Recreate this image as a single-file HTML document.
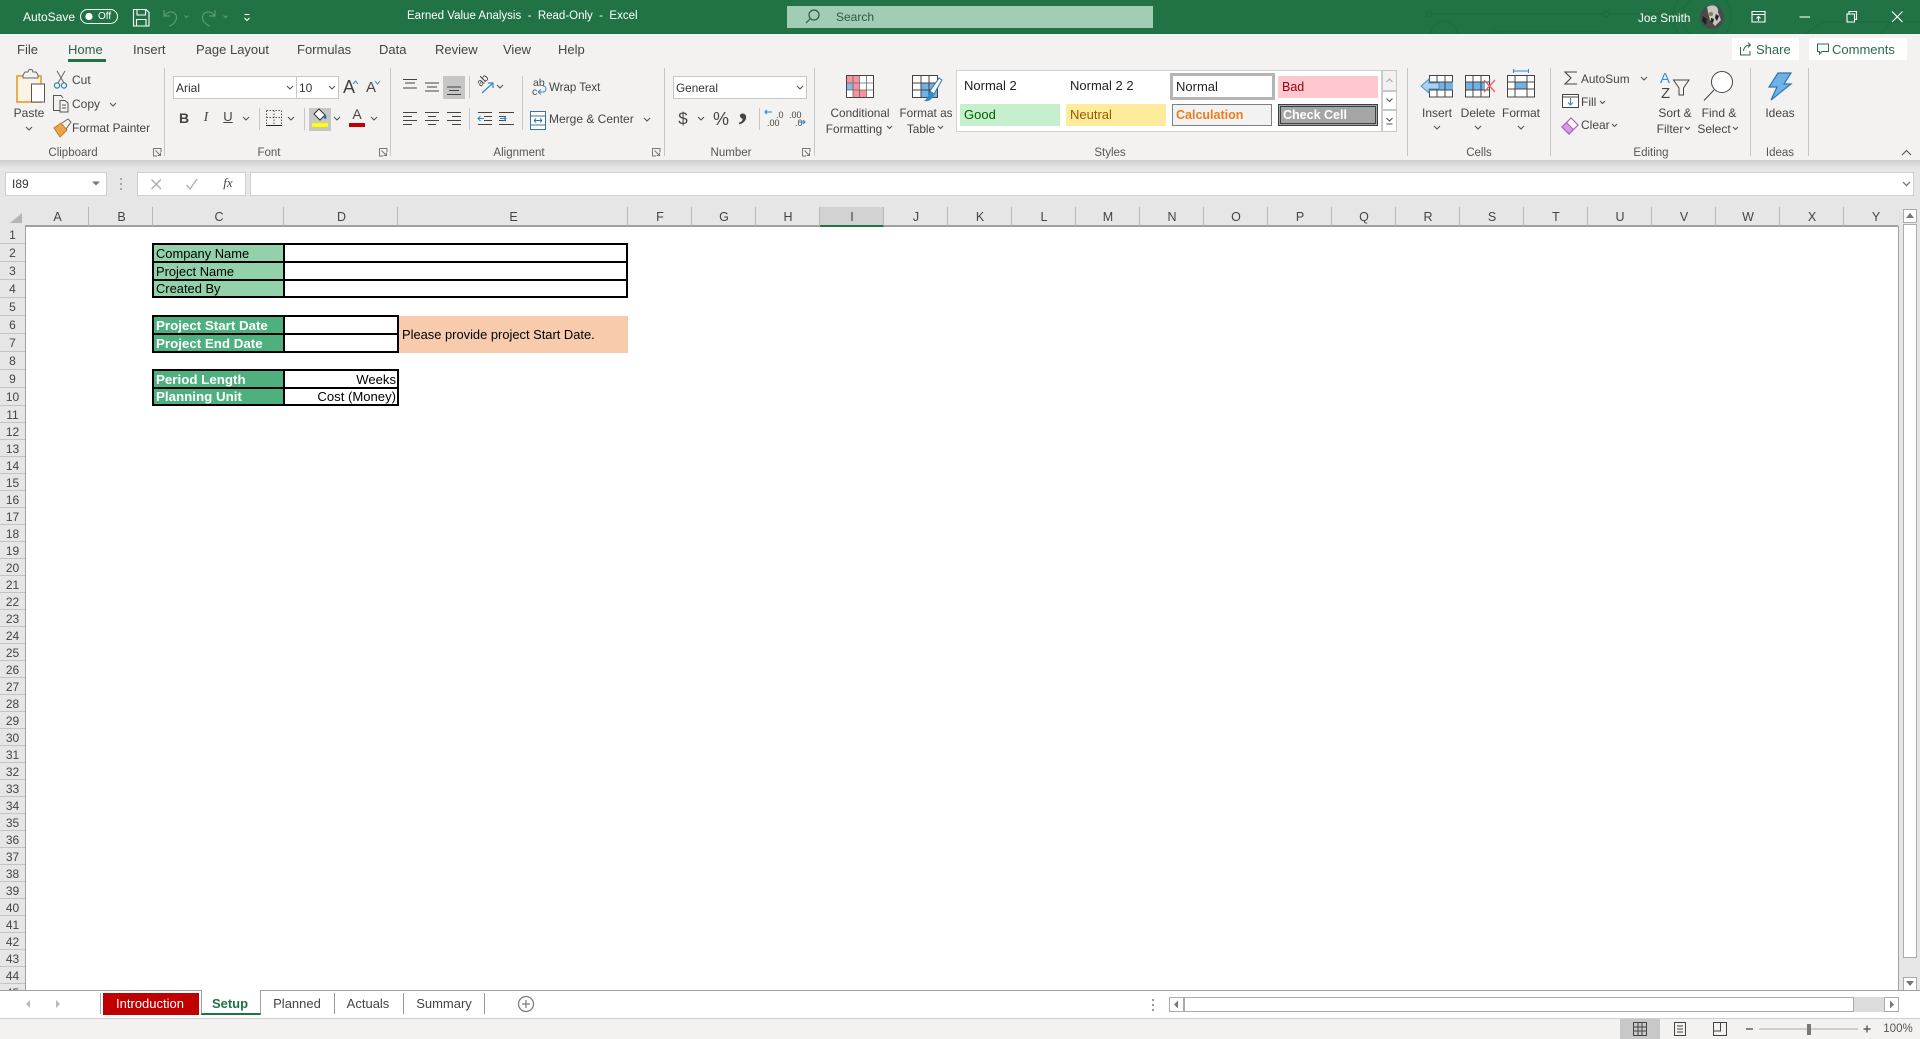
<!DOCTYPE html>
<html lang="en"><head><meta charset="utf-8"><title>Earned Value Analysis - Read-Only - Excel</title>
<style>
*{box-sizing:border-box;margin:0;padding:0}
html,body{width:1920px;height:1039px;overflow:hidden;background:#fff;font-family:"Liberation Sans",sans-serif}
.a{position:absolute}
.t{position:absolute;white-space:pre;line-height:16px;height:16px;font-size:12px;color:#444}
.c{transform:translateX(-50%)}
.w{color:#fff}
.tab{font-size:13px;color:#444}
.lb{font-size:11.5px;color:#555}
.cols{position:absolute;left:25px;top:207px;width:1873px;height:20px;display:flex;overflow:hidden}
.cols div{flex:none;width:64px;height:20px;text-align:center;font-size:12.5px;line-height:20px;color:#444;padding-left:1px;border-right:1px solid #b8b8b8;border-bottom:2px solid #a0a0a0}
.cols .p{padding-left:2px}
.rows{position:absolute;left:0;top:226px;width:26px;height:764px;overflow:hidden;background:#e6e6e6;border-right:1px solid #a0a0a0}
.rows div{height:17px;text-align:center;font-size:12px;line-height:18px;color:#444;border-bottom:1px solid #c4c4c4}
.rows .b{height:18px;line-height:19px}
.k{position:absolute;background:#000}
.f{position:absolute;font-size:12.9px;line-height:17px;color:#000;white-space:pre;padding-left:2px;background:#fff;overflow:hidden}
.s{line-height:15.5px}
.l{background:#92d1aa}
.d{background:#4eb07e;color:#fff;font-weight:bold;font-size:13.33px}
.r{text-align:right;padding:0 1px 0 0;font-size:13.1px}
.sty{position:absolute;font-size:13px;line-height:22px;white-space:pre;padding-left:4px}
</style></head><body>

<!-- title bar -->
<div class="a" style="left:0;top:0;width:1920px;height:34px;background:#217346"></div>
<div class="a" style="left:0;top:34px;width:1920px;height:126px;background:#f3f2f1"></div>
<div class="a" style="left:0;top:160px;width:1920px;height:830px;background:#e6e6e6"></div>
<div class="a" style="left:0;top:160px;width:1920px;height:8px;background:linear-gradient(#cfcfcf,#e6e6e6)"></div>

<svg class="a" style="left:0;top:0" width="1920" height="34" viewBox="0 0 1920 34" fill="none">
<g stroke="#1e6c41" stroke-width="1.3">
<path d="M1432 14H1603M1609 14H1674"/><circle cx="1429" cy="14" r="3"/><circle cx="1606" cy="14" r="3"/>
<circle cx="1702" cy="17" r="29"/><circle cx="1702" cy="17" r="20"/>
<path d="M1431 34a13 13 0 0 1 26 0M1490 34a4 4 0 0 1 8 0M1498 31H1600M1806 34L1822 22H1920M1880 34L1905 8"/>
</g>
</svg>

<div class="a" style="left:787px;top:6px;width:366px;height:22px;background:#a0cdb3"></div>

<span class="t w" style="left:23px;top:9px">AutoSave</span>
<div class="a" style="left:80px;top:9px;width:38px;height:15px;border:1.3px solid #fff;border-radius:8px"></div>
<span class="t w" style="left:98px;top:9px;font-size:10px">Off</span>
<span class="t w" style="left:407px;top:8px;font-size:11.5px">Earned Value Analysis  -  Read-Only  -  Excel</span>
<span class="t" style="left:836px;top:9px;color:#2c5a43">Search</span>
<span class="t w" style="left:1638px;top:10px;font-size:11.8px">Joe Smith</span>

<!-- tabs -->
<span class="t tab" style="left:17px;top:42px">File</span>
<span class="t tab" style="left:68px;top:42px;color:#2f5f48">Home</span>
<div class="a" style="left:68px;top:59px;width:38px;height:3px;background:#217346"></div>
<span class="t tab" style="left:133px;top:42px">Insert</span>
<span class="t tab" style="left:196px;top:42px">Page Layout</span>
<span class="t tab" style="left:297px;top:42px">Formulas</span>
<span class="t tab" style="left:379px;top:42px">Data</span>
<span class="t tab" style="left:435px;top:42px">Review</span>
<span class="t tab" style="left:503px;top:42px">View</span>
<span class="t tab" style="left:558px;top:42px">Help</span>

<div class="a" style="left:1732px;top:38px;width:67px;height:22px;background:#fff"></div>
<div class="a" style="left:1809px;top:38px;width:98px;height:22px;background:#fff"></div>
<span class="t tab" style="left:1756px;top:42px;color:#2a6a4a">Share</span>
<span class="t tab" style="left:1832px;top:42px;color:#2a6a4a">Comments</span>

<!-- ribbon field boxes and highlights -->
<div class="a" style="left:173px;top:76px;width:124px;height:23px;background:#fff;border:1px solid #c6c6c6"></div>
<div class="a" style="left:296px;top:76px;width:43px;height:23px;background:#fff;border:1px solid #c6c6c6"></div>
<div class="a" style="left:309px;top:108px;width:22px;height:23px;background:#c6c6c6"></div>
<div class="a" style="left:443px;top:76px;width:22px;height:23px;background:#c6c6c6"></div>
<div class="a" style="left:673px;top:76px;width:134px;height:23px;background:#fff;border:1px solid #c6c6c6"></div>

<!-- styles gallery -->
<div class="a" style="left:956px;top:70px;width:426px;height:62px;background:#fff;border:1px solid #d0d0d0"></div>
<div class="a" style="left:1382px;top:70px;width:15px;height:21px;background:#f3f2f1;border:1px solid #c6c6c6"></div>
<div class="a" style="left:1382px;top:91px;width:15px;height:19px;background:#fff;border:1px solid #c6c6c6"></div>
<div class="a" style="left:1382px;top:110px;width:15px;height:22px;background:#fff;border:1px solid #c6c6c6"></div>
<div class="sty" style="left:960px;top:75px;width:100px;height:22px;color:#222">Normal 2</div>
<div class="sty" style="left:1066px;top:75px;width:100px;height:22px;color:#222">Normal 2 2</div>
<div class="sty" style="left:1170px;top:73px;width:105px;height:27px;color:#222;border:3px solid #b4b4b4;background:#fff;padding-left:3px">Normal</div>
<div class="sty" style="left:1278px;top:76px;width:100px;height:22px;color:#9c0006;background:#ffc7ce;font-size:12.5px">Bad</div>
<div class="sty" style="left:960px;top:104px;width:100px;height:22px;color:#006100;background:#c6efce">Good</div>
<div class="sty" style="left:1066px;top:104px;width:100px;height:22px;color:#9c5700;background:#ffeb9c">Neutral</div>
<div class="sty" style="left:1172px;top:104px;width:100px;height:22px;color:#ee7d1b;background:#f2f2f2;border:1px solid #7f7f7f;font-weight:bold;line-height:20px;padding-left:3px;font-size:12.5px">Calculation</div>
<div class="sty" style="left:1278px;top:104px;width:100px;height:22px;color:#fff;background:#a5a5a5;border:3px double #3f3f3f;font-weight:bold;line-height:16px;padding-left:2px;font-size:12.5px">Check Cell</div>

<!-- ribbon text -->
<span class="t c" style="left:29px;top:105px">Paste</span>
<span class="t" style="left:72px;top:72px">Cut</span>
<span class="t" style="left:72px;top:96px">Copy</span>
<span class="t" style="left:72px;top:120px;font-size:11.8px">Format Painter</span>
<span class="t c lb" style="left:73px;top:145px">Clipboard</span>
<span class="t" style="left:176px;top:80px;color:#333">Arial</span>
<span class="t" style="left:299px;top:80px;color:#333">10</span>
<span class="t" style="left:343px;top:78px;font-size:18px;line-height:18px">A</span>
<span class="t" style="left:366px;top:80px;font-size:15px">A</span>
<span class="t c" style="left:184px;top:110px;font-weight:bold;font-size:14px">B</span>
<span class="t c" style="left:206px;top:110px;font-style:italic;font-size:14px;font-family:'Liberation Serif',serif">I</span>
<span class="t c" style="left:228px;top:109px;font-size:13px;text-decoration:underline">U</span>
<span class="t c" style="left:357px;top:106px;font-size:14px">A</span>
<span class="t c lb" style="left:269px;top:145px">Font</span>
<span class="t" style="left:549px;top:80px;font-size:11.5px">Wrap Text</span>
<span class="t" style="left:549px;top:111px">Merge &amp; Center</span>
<span class="t c lb" style="left:519px;top:145px">Alignment</span>
<span class="t" style="left:676px;top:80px;color:#333;font-size:11.8px">General</span>
<span class="t c" style="left:683px;top:111px;font-size:17px">$</span>
<span class="t c" style="left:721px;top:111px;font-size:18px">%</span>
<span class="t" style="left:776px;top:107px;font-size:9px">.0</span>
<span class="t" style="left:767px;top:115px;font-size:9px">.00</span>
<span class="t" style="left:789px;top:107px;font-size:9px">.00</span>
<span class="t" style="left:795px;top:115px;font-size:9px">.0</span>
<span class="t c lb" style="left:731px;top:145px">Number</span>
<span class="t c" style="left:860px;top:105px;font-size:11.8px">Conditional</span>
<span class="t c" style="left:854px;top:121px;font-size:11.8px">Formatting</span>
<span class="t c" style="left:926px;top:105px;font-size:11.8px">Format as</span>
<span class="t c" style="left:921px;top:121px;font-size:11.8px">Table</span>
<span class="t c lb" style="left:1110px;top:145px">Styles</span>
<span class="t c" style="left:1437px;top:105px">Insert</span>
<span class="t c" style="left:1478px;top:105px">Delete</span>
<span class="t c" style="left:1521px;top:105px">Format</span>
<span class="t c lb" style="left:1479px;top:145px">Cells</span>
<span class="t" style="left:1581px;top:71px;font-size:11.8px">AutoSum</span>
<span class="t" style="left:1581px;top:94px">Fill</span>
<span class="t" style="left:1581px;top:117px">Clear</span>
<span class="t" style="left:1660px;top:71px;font-size:15px;color:#3d8fcb">A</span>
<span class="t" style="left:1661px;top:86px;font-size:15px;color:#444">Z</span>
<span class="t c" style="left:1675px;top:105px">Sort &amp;</span>
<span class="t c" style="left:1670px;top:121px">Filter</span>
<span class="t c" style="left:1719px;top:105px">Find &amp;</span>
<span class="t c" style="left:1714px;top:121px">Select</span>
<span class="t c lb" style="left:1651px;top:145px">Editing</span>
<span class="t c" style="left:1780px;top:105px">Ideas</span>
<span class="t c lb" style="left:1780px;top:145px">Ideas</span>

<!-- formula bar -->
<div class="a" style="left:5px;top:172px;width:102px;height:24px;background:#fff;border:1px solid #cfcfcf"></div>
<div class="a" style="left:137px;top:172px;width:109px;height:24px;background:#fff;border:1px solid #cfcfcf"></div>
<div class="a" style="left:250px;top:172px;width:1664px;height:24px;background:#fff;border:1px solid #cfcfcf"></div>
<span class="t" style="left:12px;top:176px;font-size:12px;color:#333">I89</span>
<span class="t c" style="left:228px;top:175px;font-size:13px;font-style:italic;font-family:'Liberation Serif',serif;color:#444">fx</span>

<!-- sheet -->
<div class="a" style="left:25px;top:226px;width:1873px;height:764px;background:#fff"></div>
<div class="cols">
<div class="p">A</div><div class="p">B</div><div class="p" style="width:131px">C</div><div class="p" style="width:114px">D</div><div class="p" style="width:230px">E</div><div>F</div><div>G</div><div>H</div><div style="background:#d2d2d2;border-bottom:2px solid #217346">I</div><div>J</div><div>K</div><div>L</div><div>M</div><div>N</div><div>O</div><div>P</div><div>Q</div><div>R</div><div>S</div><div>T</div><div>U</div><div>V</div><div>W</div><div>X</div><div>Y</div>
</div>
<div class="rows">
<div class="b">1</div><div class="b">2</div><div class="b">3</div><div class="b">4</div><div class="b">5</div><div class="b">6</div><div class="b">7</div><div class="b">8</div><div class="b">9</div><div class="b">10</div><div>11</div><div>12</div><div>13</div><div>14</div><div>15</div><div>16</div><div>17</div><div>18</div><div>19</div><div>20</div><div>21</div><div>22</div><div>23</div><div>24</div><div>25</div><div>26</div><div>27</div><div>28</div><div>29</div><div>30</div><div>31</div><div>32</div><div>33</div><div>34</div><div>35</div><div>36</div><div>37</div><div>38</div><div>39</div><div>40</div><div>41</div><div>42</div><div>43</div><div>44</div><div>45</div>
</div>
<div class="a" style="left:1898px;top:226px;width:1px;height:764px;background:#a0a0a0"></div>

<!-- tables -->
<div class="k" style="left:152px;top:243px;width:476px;height:55px"></div>
<div class="f l" style="left:154px;top:245px;width:129px;height:16px">Company Name</div>
<div class="f l" style="left:154px;top:263px;width:129px;height:16px">Project Name</div>
<div class="f l s" style="left:154px;top:281px;width:129px;height:15px">Created By</div>
<div class="f" style="left:285px;top:245px;width:341px;height:16px"></div>
<div class="f" style="left:285px;top:263px;width:341px;height:16px"></div>
<div class="f" style="left:285px;top:281px;width:341px;height:15px"></div>

<div class="k" style="left:152px;top:315px;width:247px;height:38px"></div>
<div class="f d" style="left:154px;top:317px;width:129px;height:16px">Project Start Date</div>
<div class="f d" style="left:154px;top:335px;width:129px;height:16px">Project End Date</div>
<div class="f" style="left:285px;top:317px;width:112px;height:16px"></div>
<div class="f" style="left:285px;top:335px;width:112px;height:16px"></div>
<div class="f" style="left:399px;top:316px;width:229px;height:37px;background:#f8cbad;line-height:37px;padding-left:3px">Please provide project Start Date.</div>

<div class="k" style="left:152px;top:369px;width:247px;height:37px"></div>
<div class="f d" style="left:154px;top:371px;width:129px;height:16px">Period Length</div>
<div class="f d s" style="left:154px;top:389px;width:129px;height:15px">Planning Unit</div>
<div class="f r" style="left:285px;top:371px;width:112px;height:16px">Weeks</div>
<div class="f r s" style="left:285px;top:389px;width:112px;height:15px">Cost (Money)</div>

<!-- vertical scrollbar -->
<div class="a" style="left:1903px;top:209px;width:14px;height:14px;background:#fff;border:1px solid #ababab"></div>
<div class="a" style="left:1903px;top:224px;width:14px;height:734px;background:#fff;border:1px solid #ababab"></div>
<div class="a" style="left:1903px;top:977px;width:14px;height:14px;background:#fff;border:1px solid #ababab"></div>

<!-- sheet tab bar -->
<div class="a" style="left:0;top:990px;width:1920px;height:1px;background:#a0a0a0"></div>
<div class="a" style="left:0;top:1018px;width:1920px;height:21px;background:#f3f2f1;border-top:1px solid #cfcfcf"></div>
<div class="a" style="left:103px;top:993px;width:96px;height:22px;background:#c00000"></div>
<div class="a" style="left:201px;top:990px;width:60px;height:25px;background:#fff;border-left:1px solid #a0a0a0;border-right:1px solid #a0a0a0;border-bottom:2px solid #217346"></div>
<span class="t tab c" style="left:150px;top:996px;color:#fff">Introduction</span>
<span class="t tab c" style="left:230px;top:996px;color:#217346;font-weight:bold">Setup</span>
<span class="t tab c" style="left:297px;top:996px">Planned</span>
<span class="t tab c" style="left:368px;top:996px">Actuals</span>
<span class="t tab c" style="left:444px;top:996px">Summary</span>
<div class="a" style="left:100px;top:993px;width:1px;height:21px;background:#aaa"></div>
<div class="a" style="left:334px;top:993px;width:1px;height:21px;background:#999"></div>
<div class="a" style="left:403px;top:993px;width:1px;height:21px;background:#999"></div>
<div class="a" style="left:484px;top:993px;width:1px;height:21px;background:#999"></div>

<!-- horizontal scrollbar -->
<div class="a" style="left:1169px;top:997px;width:729px;height:15px;background:#dcdcdc"></div>
<div class="a" style="left:1169px;top:997px;width:15px;height:15px;background:#fff;border:1px solid #ababab"></div>
<div class="a" style="left:1184px;top:997px;width:670px;height:15px;background:#fff;border:1px solid #ababab"></div>
<div class="a" style="left:1884px;top:997px;width:15px;height:15px;background:#fff;border:1px solid #ababab"></div>

<!-- status bar -->
<div class="a" style="left:1620px;top:1019px;width:40px;height:20px;background:#c8c8c8"></div>
<span class="t c" style="left:1898px;top:1021px;font-size:11.5px;color:#555">100%</span>

<!-- icons -->
<svg class="a" style="left:0;top:0" width="1920" height="1039" viewBox="0 0 1920 1039" fill="none">
<!-- toggle dot + QAT -->
<circle cx="89" cy="16.5" r="3.6" fill="#fff"/>
<g stroke="#fff" stroke-width="1.1">
<path d="M133.5 9.5H146L149 12.5V26H133.5ZM137 9.5V15H145.5V9.5M136.5 26V19.5H146V26"/>
<path d="M244.5 14.5h5M244.5 18l2.5 2.500 2.500-2.500" />
</g>
<g stroke="#5a9a76" stroke-width="1.2">
<path d="M164 10V16H170M164.5 16C168 10 176 11 176.500 17C176.800 21 173 25 169 26"/>
<path d="M215 10V16H209M214.500 16C211 10 203 11 202.500 17C202.200 21 206 25 210 26"/>
<path d="M184.500 15.500l2 2 2-2M223.500 15.500l2 2 2-2"/>
</g>
<!-- search icon -->
<g stroke="#2c5a43" stroke-width="1.2"><circle cx="814" cy="15" r="5"/><path d="M810.500 18.500L806 23"/></g>
<!-- avatar -->
<circle cx="1712" cy="17" r="12" fill="#4a4a48"/>
<path d="M1707 7C1714 3 1719 7 1718 12L1721 20 1715 26 1710 20 1708 12Z" fill="#c9c6c0"/>
<path d="M1703 16l4 3-1 6-4-4ZM1716 14l3 2-2 5-2-3ZM1711 18l3 1-1 4-2-1Z" fill="#222"/>
<circle cx="1711" cy="14" r="2" fill="#8a7a70"/>
<!-- window controls -->
<g stroke="#fff" stroke-width="1.1">
<path d="M1752 11.500H1765V22H1752ZM1752 14.500H1765M1758.500 21V16.500M1756.500 18.500l2-2 2 2"/>
<path d="M1799.500 17H1810"/>
<path d="M1847 14H1854.500V22H1847ZM1849 14V11.500H1856.500V19.500H1854.500"/>
<path d="M1892 11.500L1902.500 22M1902.500 11.500L1892 22"/>
</g>
<g stroke="#2a6a4a" stroke-width="1"><path d="M1740.500 47V55H1750V51M1743.500 51C1744 47 1746.500 45 1750.500 45M1748 42.500l2.500 2.500-2.500 2.500"/><path d="M1817.500 44H1828.500V51.500H1822L1819.500 54V51.500H1817.500Z"/></g>

<!-- group separators -->
<g stroke="#c8c6c4" stroke-width="1">
<path d="M164.500 68V156M390.500 68V156M664.500 68V156M814.500 68V156M1407.500 68V156M1550.500 68V156M1750.500 68V156M1808.500 68V156"/>
<path d="M259.500 108V130M304.500 108V130M469.500 76V98M469.500 108V130M522.500 76V130M759.500 108V130"/>
</g>
<!-- launchers -->
<g stroke="#777" stroke-width="1">
<path d="M161 152V148.500H153.500V156H157M155.500 150.500L160.500 155.500M160.500 152.500V155.500H157.500"/>
<path d="M387 152V148.500H379.500V156H383M381.500 150.500L386.500 155.500M386.500 152.500V155.500H383.500"/>
<path d="M660 152V148.500H652.500V156H656M654.500 150.500L659.500 155.500M659.500 152.500V155.500H656.500"/>
<path d="M810 152V148.500H802.500V156H806M804.500 150.500L809.500 155.500M809.500 152.500V155.500H806.500"/>
</g>
<!-- chevrons -->
<path stroke="#555" stroke-width="1.1" d="M26 127l3 3 3-3M110 103l3 3 3-3M287 86l3 3 3-3M329 86l3 3 3-3M243 117l3 3 3-3M288 117l3 3 3-3M334 117l3 3 3-3M371 117l3 3 3-3M497 85l3 3 3-3M644 118l3 3 3-3M698 117l3 3 3-3M797 86l3 3 3-3M887 126l2.500 2.500 2.500-2.500M938 126l2.500 2.500 2.500-2.500M1434 126l3 3 3-3M1475 126l3 3 3-3M1518 126l3 3 3-3M1641 77l3 3 3-3M1600 101l2.500 2.500 2.500-2.500M1612 124l2.500 2.500 2.500-2.500M1685 127l2.500 2.500 2.500-2.500M1733 127l2.500 2.500 2.500-2.500M1386.500 98.500l3 3 3-3M1386.500 118l3 3 3-3M1386.500 124h6M1902 155l4.500-4.500 4.500 4.500"/>
<path stroke="#aaa" stroke-width="1.1" d="M1386.500 82l3-3 3 3"/>
<path stroke="#4b98cc" stroke-width="1.1" d="M353 84l2.500-3 2.500 3M375 81l2.500 3 2.500-3"/>

<!-- paste -->
<path d="M17 76H41V102H17Z" fill="#fdf3e3" stroke="#e6a23c" stroke-width="1.700"/>
<path d="M23 75L25 72H28L29 69.500H32L33 72H36L38 75V78H23Z" fill="#f3f2f1" stroke="#666"/>
<path d="M31.500 84H44.500V102H31.500Z" fill="#fff" stroke="#555"/>
<!-- cut -->
<g stroke="#666" stroke-width="1"><path d="M57 71L64 83M65 71L58 83"/></g>
<g stroke="#2e7eb5" stroke-width="1.200"><circle cx="57" cy="85.500" r="2.600"/><circle cx="64" cy="85.500" r="2.600"/></g>
<!-- copy -->
<path stroke="#555" d="M60 110.500H53.500V95.500H61L63 98M60 100.500H65L68 103V112H60ZM62 105H66M62 108H66"/>
<!-- painter -->
<path d="M54 128L61 123L67 130L60 137Z" fill="#eaa54a" stroke="#c77a24"/>
<path stroke="#666" d="M62 123L68 119L71 122L66 129"/>
<!-- borders -->
<path stroke="#555" stroke-dasharray="1.500 1.500" d="M266.500 110.500H281.500V125M266.500 110.500V125M274 110.500V125M266.500 117.500H281.500"/>
<path stroke="#222" d="M266 125.500H282"/>
<!-- fill colour -->
<path d="M314 114L319 109L325 115L320 120Z" fill="#fff" stroke="#333"/>
<path d="M325 114C327 116 327 119 325 119C324 119 323 117 325 114Z" fill="#2b6fa8"/>
<rect x="312" y="123" width="16" height="4" fill="#ffff00"/>
<rect x="349" y="123" width="16" height="4" fill="#c00000"/>
<!-- alignment -->
<path stroke="#444" d="M403 79.500H417M405 83H415M403 88H417M425 83H439M427 87H437M425 91H439M447 87H461M449 90.500H459M447 94.500H461M403 112.500H417M403 116.500H412M403 120.500H417M403 124.500H412M425 112.500H439M428 116.500H436M425 120.500H439M428 124.500H436M447 112.500H461M452 116.500H461M447 120.500H461M452 124.500H461M478 112.500H492M484 116.500H492M484 120.500H492M478 124.500H492M499 112.500H514M499 116.500H506M499 120.500H506M499 124.500H514"/>
<path stroke="#2e88c9" d="M484 118.500H478M480.500 116L478 118.500 480.500 121M500 118.500H506M503.500 116L506 118.500 503.500 121"/>
<!-- orientation -->
<text x="476" y="84" font-size="11" fill="#444" font-family="Liberation Sans" transform="rotate(-45 482 80)">ab</text>
<path stroke="#2e88c9" stroke-width="1.200" d="M482 93L493 83M488 83H493V88"/>
<!-- wrap -->
<path stroke="#2e88c9" d="M538 92H543C547 92 547 86 543 86M538 92l3-2.500M538 92l3 2.500"/>
<text x="533" y="86" font-size="10.500" fill="#444" font-family="Liberation Sans">ab</text>
<text x="532" y="95" font-size="10.500" fill="#444" font-family="Liberation Sans">c</text>
<rect x="530.500" y="111.500" width="15" height="18" fill="#fff" stroke="#33779f"/>
<path stroke="#33779f" d="M530.500 116H545.500M530.500 125H545.500M534 120.500H542M534 120.500l2-2M534 120.500l2 2M542 120.500l-2-2M542 120.500l-2 2"/>
<!-- number -->
<text x="743" y="119" font-size="36" font-weight="bold" fill="#444" text-anchor="middle" font-family="Liberation Serif">,</text>
<path stroke="#2e88c9" stroke-width="1.100" d="M765 112H772M767 110L765 112 767 114M799 122H805M803 120L805 122 803 124"/>
<!-- conditional formatting -->
<rect x="846.500" y="75.500" width="27" height="22" fill="#fff" stroke="#444"/>
<rect x="847" y="76" width="12" height="7" fill="#f8929c"/><rect x="853" y="83" width="6" height="7" fill="#f8929c"/><rect x="847" y="83" width="6" height="7" fill="#8fb6de"/><rect x="853" y="90" width="13" height="7" fill="#f8929c"/>
<path stroke="#666" stroke-width=".8" d="M846.500 83H873.500M846.500 90H873.500M853 75.500V97.500M859.500 75.500V97.500M866.500 75.500V97.500"/>
<!-- format as table -->
<rect x="912.500" y="75.500" width="25" height="22" fill="#fff" stroke="#444"/>
<rect x="921" y="83" width="16" height="14" fill="#6fb2e6"/>
<path stroke="#444" d="M912.500 83H937.500M912.500 90H937.500M921 75.500V97.500M929 75.500V97.500"/>
<path d="M942 80L934 94L930 91L939 78Z" fill="#fff" stroke="#2e75b5"/>
<path d="M930 92L934 95C932 100 928 102 924 101C927 99 928 96 930 92Z" fill="#2e88c9"/>
<!-- insert -->
<rect x="1429.500" y="75.500" width="23" height="21.500" fill="#fff" stroke="#444"/>
<rect x="1430" y="82" width="23" height="8" fill="#6fb2e6"/>
<path stroke="#444" d="M1429.500 82H1452.500M1429.500 90H1452.500M1437 75.500V97M1445 75.500V97"/>
<path d="M1421 86L1429 79V83H1439V89H1429V93Z" fill="#a9d2f0" stroke="#4a90c8"/>
<!-- delete -->
<rect x="1465.500" y="75.500" width="24" height="21.500" fill="#fff" stroke="#444"/>
<rect x="1466" y="82" width="19" height="8" fill="#6fb2e6"/>
<path stroke="#444" d="M1465.500 82H1489.500M1465.500 90H1489.500M1473 75.500V97M1481 75.500V97"/>
<path stroke="#e8635c" stroke-width="1.300" d="M1484 80L1495 92M1495 80L1484 92"/>
<!-- format -->
<rect x="1507.500" y="75.500" width="27" height="21.500" fill="#fff" stroke="#444"/>
<rect x="1515" y="82" width="12" height="7" fill="#6fb2e6"/>
<path stroke="#444" d="M1507.500 82H1534.500M1507.500 89H1534.500M1515 75.500V97M1527 75.500V97"/>
<path stroke="#2e88c9" d="M1513 71H1529M1513.500 69V73M1528.500 69V73"/>
<!-- editing -->
<path stroke="#444" stroke-width="1.100" d="M1577 72H1565L1571 78L1565 84H1577"/>
<rect x="1562.500" y="94.500" width="16" height="13" fill="#fff" stroke="#444"/>
<path stroke="#2e88c9" d="M1570.500 98V105M1568 102.500l2.500 2.500 2.500-2.500"/><path stroke="#444" d="M1562.500 97H1578.500"/>
<path d="M1562 127L1571 118L1578 125L1569 134Z" fill="#fff" stroke="#b05cc2" stroke-width="1.200"/>
<path d="M1562 127L1566.500 122.500L1573.500 129.500L1569 134Z" fill="#d49be0" stroke="#b05cc2"/>
<path stroke="#444" d="M1673.500 80H1689L1683.500 88V95L1679 95V88Z"/>
<g stroke="#444"><circle cx="1722" cy="82" r="10.500" fill="#fff"/><path d="M1714 90L1704 100.500"/></g>
<!-- ideas -->
<path d="M1778 73H1791L1784 84H1791L1771 100L1777 87H1769Z" fill="#6fb2e6" stroke="#2e75b5" stroke-width="1.200"/>
<!-- formula bar -->
<path fill="#777" d="M92 181.500H100L96 185.500Z"/>
<path fill="#aaa" d="M120 178h2v2h-2ZM120 183h2v2h-2ZM120 188h2v2h-2Z"/>
<path stroke="#aaa" stroke-width="1.300" d="M151.500 179.500L161 189M161 179.500L151.500 189M186.500 185L190 189L197 179"/>
<path stroke="#777" stroke-width="1.300" d="M1903 182l3.500 3.500 3.500-3.500"/>
<!-- corner triangle -->
<path fill="#b5b5b5" d="M22 213V223H10Z"/>
<!-- scroll arrows -->
<path fill="#777" d="M1910 213L1914 218H1906ZM1910 986L1906 981H1914ZM1174 1004.500L1178 1000.500V1008.500ZM1894 1004.500L1890 1000.500V1008.500Z"/>
<path fill="#b8b8b8" d="M26 1004L30 1000V1008ZM60 1004L56 1000V1008Z"/>
<!-- add sheet -->
<g stroke="#777" stroke-width="1.200"><circle cx="526" cy="1004" r="7.500"/><path d="M522 1004H530M526 1000V1008"/></g>
<path fill="#999" d="M1152 999h2v2h-2ZM1152 1004h2v2h-2ZM1152 1009h2v2h-2Z"/>
<!-- status bar icons -->
<path stroke="#444" d="M1633.500 1022.500H1646.500V1035.500H1633.500ZM1633.500 1027H1646.500M1633.500 1031H1646.500M1638 1022.500V1035.500M1642 1022.500V1035.500"/>
<path stroke="#444" d="M1674.500 1022.500H1685.500V1035.500H1674.500ZM1677 1026H1683M1677 1029H1683M1677 1032H1683"/>
<path stroke="#444" d="M1713.500 1022.500H1726.500V1035.500H1713.500ZM1713.500 1031H1720.500V1022.500"/>
<path stroke="#444" stroke-width="1.200" d="M1746 1029H1753M1863.500 1029H1870.500M1867 1025.500V1032.500"/>
<path stroke="#aaa" d="M1759 1029H1858"/>
<rect x="1807" y="1024" width="4" height="11" fill="#777"/>
</svg>
</body></html>
